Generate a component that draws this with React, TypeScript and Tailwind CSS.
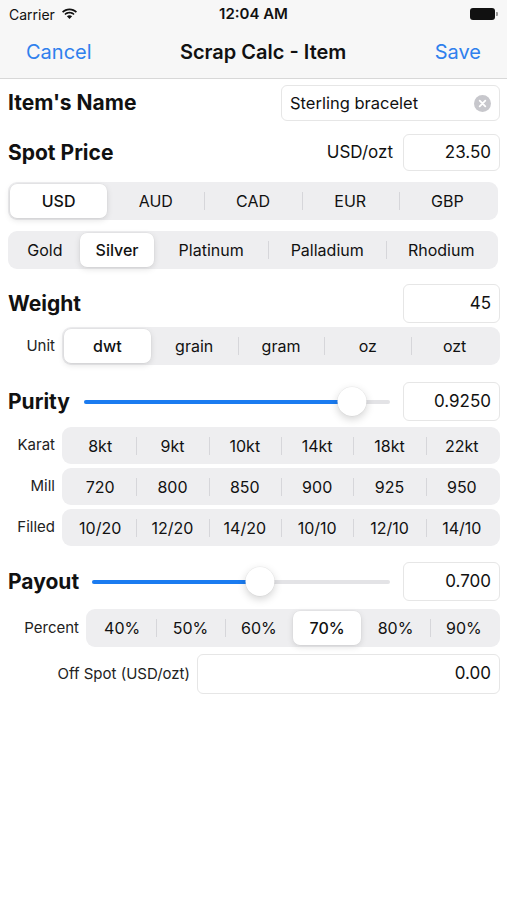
import * as React from "react"

const font = { fontFamily: "Inter, 'Liberation Sans', sans-serif" }

function Segmented({
  items,
  selected,
  cols,
  h = "h-[38px]",
  className = "",
}: {
  items: string[]
  selected: number
  cols?: string
  h?: string
  className?: string
}) {
  return (
    <div
      className={`grid ${h} rounded-[9px] bg-[#eeeef0] p-[2px] ${cols ?? ""} ${className}`}
      style={cols ? undefined : { gridTemplateColumns: `repeat(${items.length}, minmax(0, 1fr))` }}
    >
      {items.map((it, i) => {
        const sel = i === selected
        const showSep = i > 0 && i !== selected && i - 1 !== selected
        return (
          <div key={it} className="relative flex items-center justify-center">
            {showSep && <span className="absolute left-0 top-[8px] h-[18px] w-px bg-[#d6d6da]" />}
            <div
              className={`flex h-full w-full items-center justify-center rounded-[7px] text-[16px] text-[#111] ${
                sel ? "bg-white font-medium shadow-[0_2px_6px_rgba(0,0,0,0.12),0_0_0_0.5px_rgba(0,0,0,0.04)]" : ""
              }`}
            >
              {it}
            </div>
          </div>
        )
      })}
    </div>
  )
}

function Field({ value, className = "" }: { value: string; className?: string }) {
  return (
    <div
      className={`flex items-center justify-end rounded-[6px] border border-[#e6e6e6] bg-white pr-[8px] text-[17px] text-[#111] ${className}`}
    >
      {value}
    </div>
  )
}

function Slider({ pct }: { pct: number }) {
  return (
    <div className="relative flex h-[30px] flex-1 items-center">
      <div className="h-[4px] w-full rounded-full bg-[#e3e3e6]" />
      <div className="absolute left-0 h-[4px] rounded-full bg-[#1a7bf0]" style={{ width: `${pct}%` }} />
      <div
        className="absolute h-[29px] w-[29px] -translate-x-1/2 rounded-full bg-white shadow-[0_3px_8px_rgba(0,0,0,0.18),0_0_0_0.5px_rgba(0,0,0,0.06)]"
        style={{ left: `${pct}%` }}
      />
    </div>
  )
}

function RowLabel({ children, w }: { children: React.ReactNode; w: string }) {
  return <div className={`${w} shrink-0 pr-[7px] text-right text-[15px] text-[#222]`}>{children}</div>
}

export default function App() {
  return (
    <div className="min-h-[900px] w-[507px] bg-white" style={font}>
      <div className="border-b border-[#d8d8d8] bg-[#f7f7f7]">
        <div className="flex h-[28px] items-center justify-between px-[9px]">
          <div className="flex w-[120px] items-center gap-[6px] text-[14px] text-[#111]">
            Carrier
            <svg width="17" height="12" viewBox="0 0 17 12">
              <path d="M8.5 2.2c2.4 0 4.6.9 6.3 2.5l1.2-1.2C14 1.5 11.4.4 8.5.4S3 1.5 1 3.5l1.2 1.2C3.9 3.1 6.1 2.2 8.5 2.2z" fill="#111" />
              <path d="M8.5 5.6c1.5 0 2.8.5 3.9 1.5l1.2-1.2C12.3 4.6 10.5 3.8 8.5 3.8S4.7 4.6 3.4 5.9l1.2 1.2c1.1-1 2.4-1.5 3.9-1.5z" fill="#111" />
              <path d="M8.5 7.3c-1 0-1.9.4-2.6 1l2.6 2.8 2.6-2.8c-.7-.6-1.6-1-2.6-1z" fill="#111" />
            </svg>
          </div>
          <div className="text-[15px] font-semibold text-[#111]">12:04 AM</div>
          <div className="flex w-[120px] justify-end">
            <div className="flex items-center">
              <div className="h-[12px] w-[25px] rounded-[3px] bg-[#111]" />
              <div className="ml-[1px] h-[4px] w-[2px] rounded-r-[1px] bg-[#999]" />
            </div>
          </div>
        </div>
        <div className="flex h-[50px] items-center justify-between px-[26px] pb-[2px]">
          <span className="text-[20px] text-[#2f80ed]">Cancel</span>
          <span className="text-[20px] font-semibold text-[#111]">Scrap Calc - Item</span>
          <span className="text-[20px] text-[#2f80ed]">Save</span>
        </div>
      </div>

      <div className="px-[7px]">
        <div className="mt-[6px] flex items-center justify-between">
          <span className="pl-[1px] text-[21px] font-bold text-[#111]">Item's Name</span>
          <div className="flex h-[36px] w-[219px] items-center justify-between rounded-[6px] border border-[#e6e6e6] pl-[8px] pr-[8px] text-[16.5px] text-[#111]">
            Sterling bracelet
            <svg width="17" height="17" viewBox="0 0 17 17">
              <circle cx="8.5" cy="8.5" r="8.5" fill="#c7c7cc" />
              <path d="M5.7 5.7l5.6 5.6M11.3 5.7l-5.6 5.6" stroke="#fff" strokeWidth="1.8" strokeLinecap="round" />
            </svg>
          </div>
        </div>

        <div className="mt-[13px] flex items-center">
          <span className="flex-1 pl-[1px] text-[21px] font-bold text-[#111]">Spot Price</span>
          <span className="mr-[10px] text-[17px] text-[#111]">USD/ozt</span>
          <Field value="23.50" className="h-[37px] w-[97px]" />
        </div>

        <Segmented
          className="mt-[11px] ml-[1px] mr-[2px]"
          items={["USD", "AUD", "CAD", "EUR", "GBP"]}
          selected={0}
        />

        <Segmented
          className="mt-[11px] ml-[1px] mr-[2px]"
          cols="grid-cols-[70fr_75fr_114fr_119fr_110fr]"
          items={["Gold", "Silver", "Platinum", "Palladium", "Rhodium"]}
          selected={1}
        />

        <div className="mt-[15px] flex items-center justify-between">
          <span className="pl-[1px] text-[21px] font-bold text-[#111]">Weight</span>
          <Field value="45" className="h-[39px] w-[97px]" />
        </div>

        <div className="mt-[4px] flex items-center">
          <RowLabel w="w-[55px]">Unit</RowLabel>
          <div className="flex-1">
            <Segmented items={["dwt", "grain", "gram", "oz", "ozt"]} selected={0} />
          </div>
        </div>

        <div className="mt-[17px] flex items-center">
          <span className="w-[77px] shrink-0 pl-[1px] text-[21px] font-bold text-[#111]">Purity</span>
          <Slider pct={87.5} />
          <Field value="0.9250" className="ml-[13px] h-[39px] w-[97px]" />
        </div>

        <div className="mt-[6px] flex flex-col gap-[4px]">
          {[
            ["Karat", ["8kt", "9kt", "10kt", "14kt", "18kt", "22kt"]],
            ["Mill", ["720", "800", "850", "900", "925", "950"]],
            ["Filled", ["10/20", "12/20", "14/20", "10/10", "12/10", "14/10"]],
          ].map(([label, items]) => (
            <div key={label as string} className="flex items-center">
              <RowLabel w="w-[55px]">{label as string}</RowLabel>
              <div className="flex-1">
                <Segmented items={items as string[]} selected={-1} h="h-[37px]" />
              </div>
            </div>
          ))}
        </div>

        <div className="mt-[16px] flex items-center">
          <span className="w-[85px] shrink-0 pl-[1px] text-[21px] font-bold text-[#111]">Payout</span>
          <Slider pct={56.5} />
          <Field value="0.700" className="ml-[13px] h-[39px] w-[97px]" />
        </div>

        <div className="mt-[8px] flex items-center">
          <RowLabel w="w-[79px]">Percent</RowLabel>
          <div className="flex-1">
            <Segmented items={["40%", "50%", "60%", "70%", "80%", "90%"]} selected={3} />
          </div>
        </div>

        <div className="mt-[7px] flex items-center">
          <RowLabel w="w-[190px]">Off Spot (USD/ozt)</RowLabel>
          <Field value="0.00" className="h-[40px] flex-1" />
        </div>
      </div>
    </div>
  )
}
